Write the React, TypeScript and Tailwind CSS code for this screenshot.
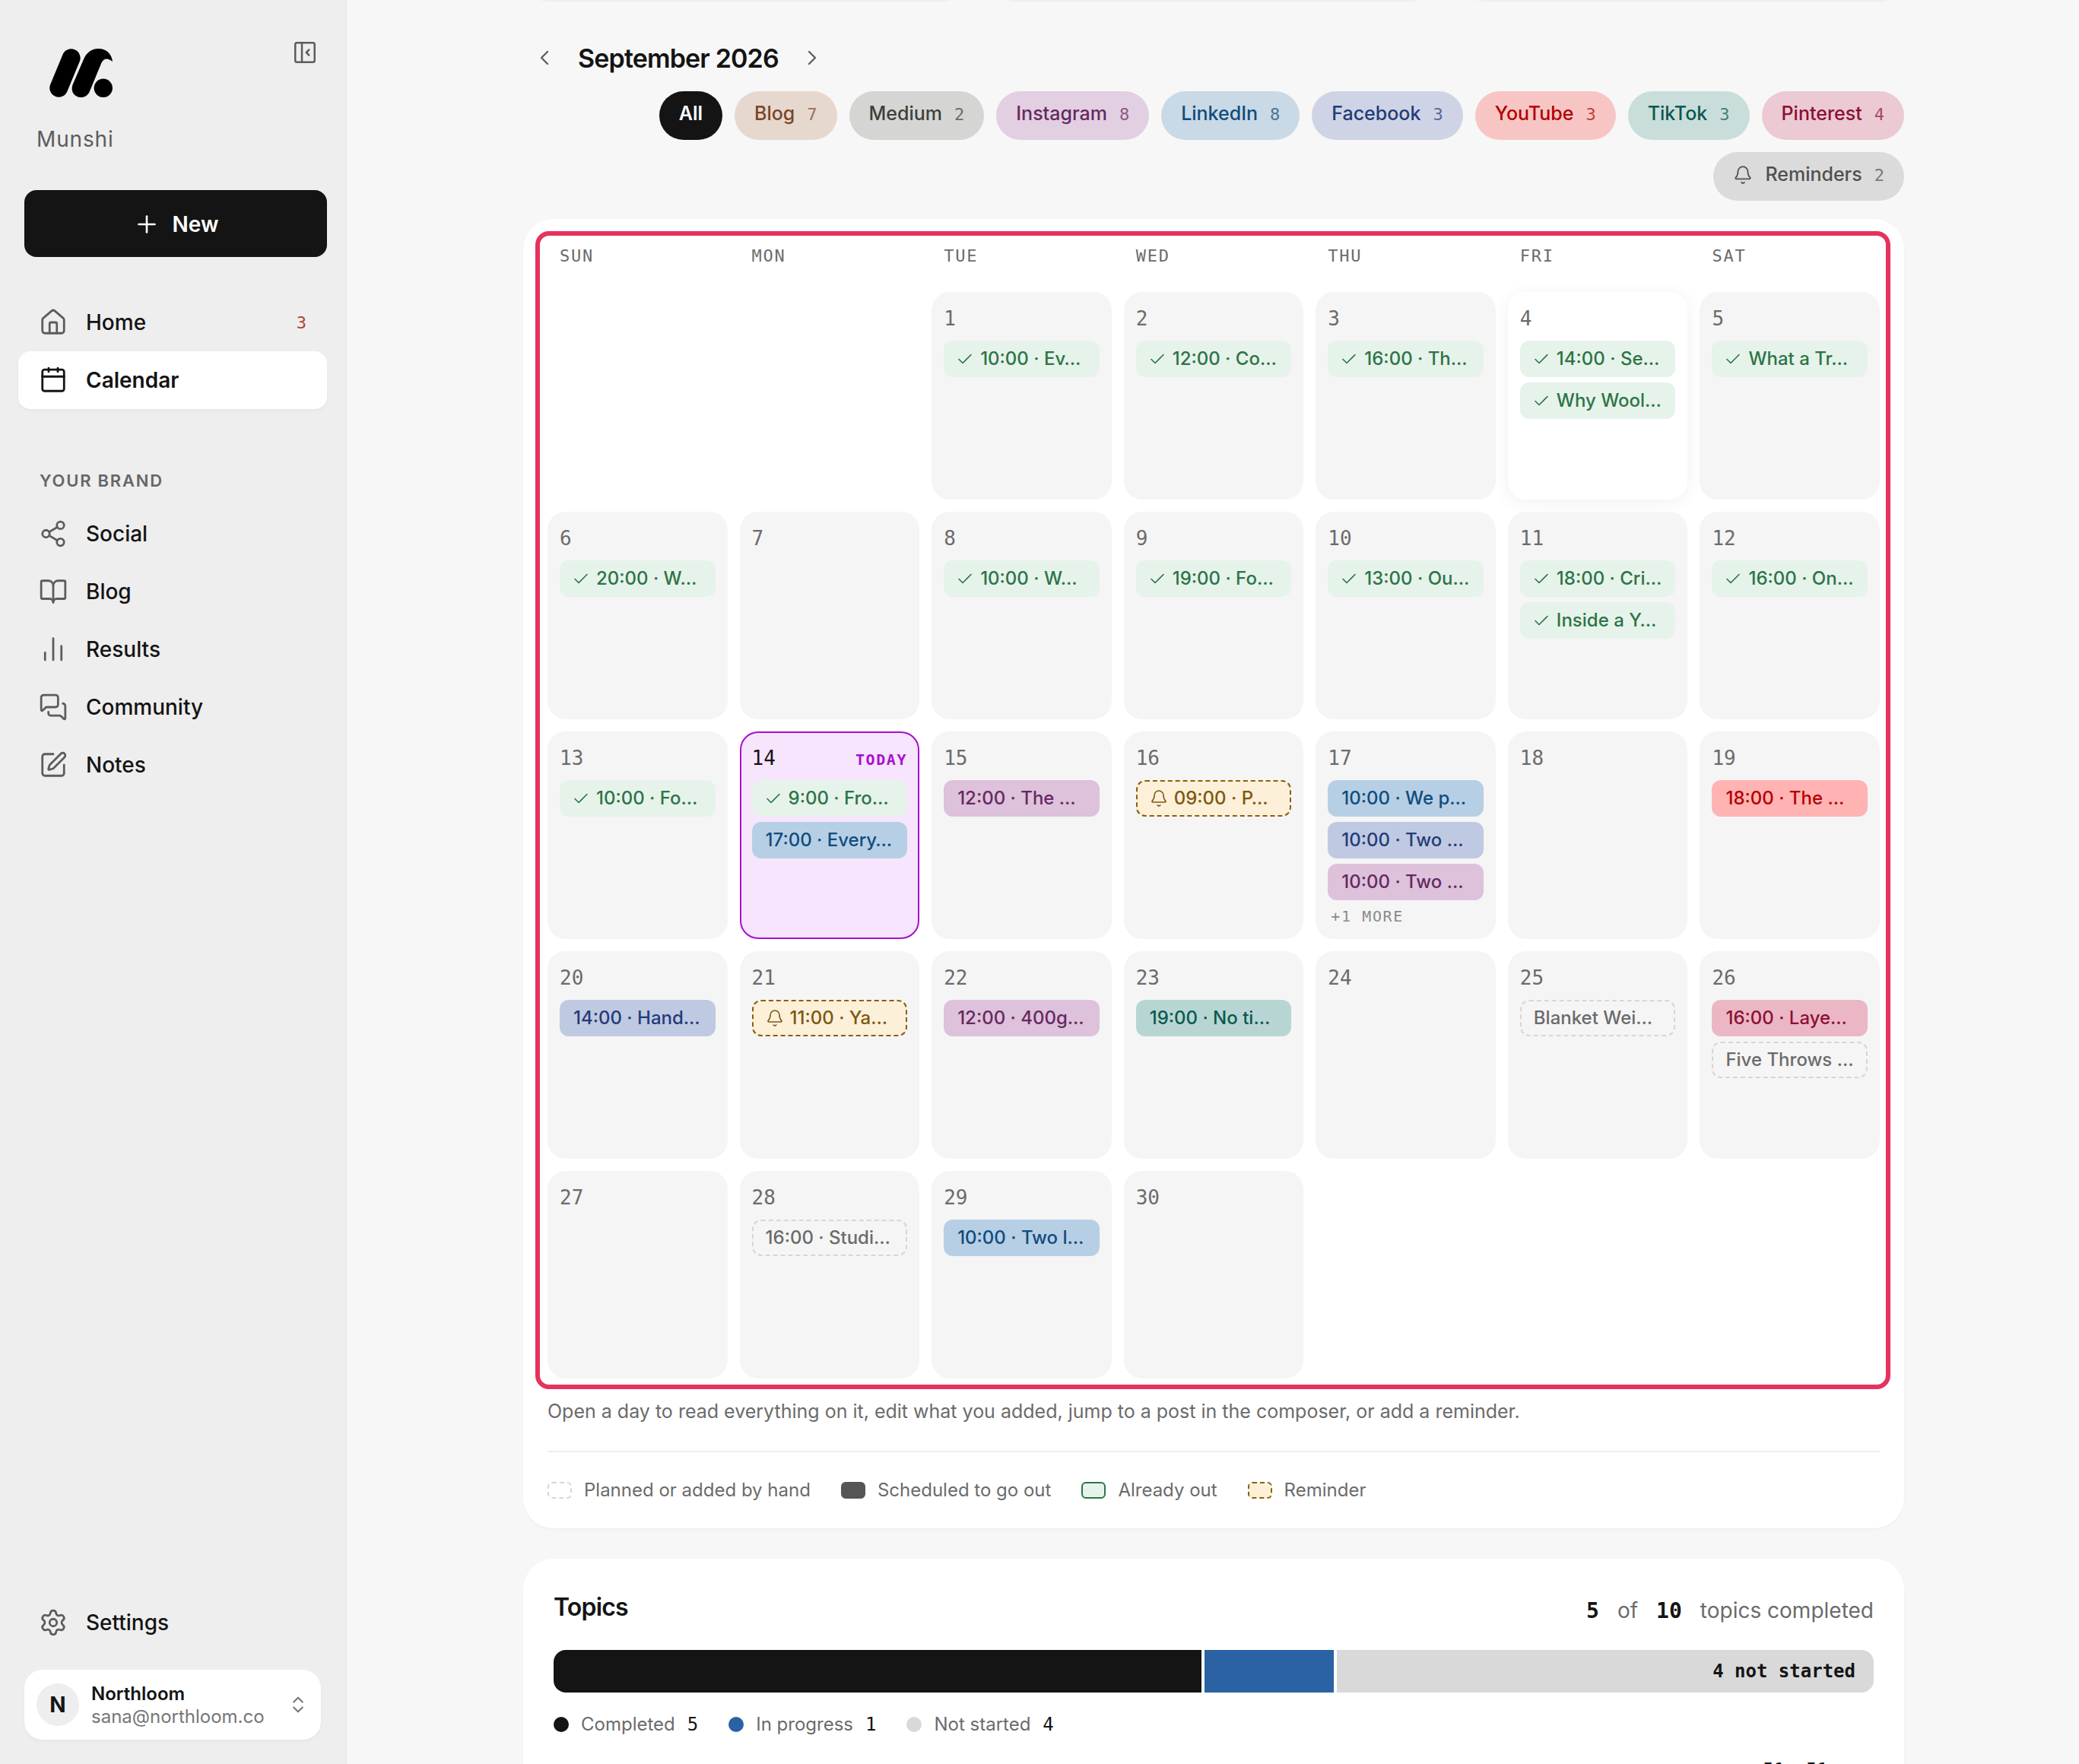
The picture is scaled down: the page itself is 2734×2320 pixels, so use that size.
import type { ReactNode } from "react";
import {
  House, Share2, BookOpen, MessagesSquare, SquarePen, Settings,
  Bell, Plus, ChevronLeft, ChevronRight, ChevronsUpDown,
} from "lucide-react";

type Kind =
  | "out" | "instagram" | "linkedin" | "facebook" | "youtube"
  | "tiktok" | "pinterest" | "reminder" | "planned";

interface Entry {
  kind: Kind;
  text: string;
}

interface Day {
  entries: Entry[];
  more?: number;
}

const MONO = "font-['DejaVu_Sans_Mono',monospace]";

const chipStyles: Record<Kind, string> = {
  out: "border-transparent bg-[#e6f3ea] text-[#2c7448]",
  instagram: "border-transparent bg-[#dec1db] text-[#642a62]",
  linkedin: "border-transparent bg-[#b6cfe5] text-[#104c7c]",
  facebook: "border-transparent bg-[#bfc9e2] text-[#243b78]",
  youtube: "border-transparent bg-[#ffb3b3] text-[#b30000]",
  tiktok: "border-transparent bg-[#b7d6d3] text-[#0c5850]",
  pinterest: "border-transparent bg-[#ebb7c4] text-[#8c0f33]",
  reminder: "border-dashed border-[#8a6010] bg-[#fcf0d9] text-[#7d5810]",
  planned: "border-dashed border-[#d6d6d6] text-[#6b6b6b]",
};

const filters = [
  { label: "Blog", count: 7, style: "bg-[#e6d8cf] text-[#7a4526]" },
  { label: "Medium", count: 2, style: "bg-[#d5d6d3] text-[#3f403a]" },
  { label: "Instagram", count: 8, style: "bg-[#e2cfe1] text-[#642a62]" },
  { label: "LinkedIn", count: 8, style: "bg-[#c9d9e5] text-[#104c7c]" },
  { label: "Facebook", count: 3, style: "bg-[#ced4e5] text-[#243b78]" },
  { label: "YouTube", count: 3, style: "bg-[#f7c6c4] text-[#b30000]" },
  { label: "TikTok", count: 3, style: "bg-[#c9dedb] text-[#0c5850]" },
  { label: "Pinterest", count: 4, style: "bg-[#ebcad3] text-[#8c0f33]" },
];

const out = (text: string): Entry => ({ kind: "out", text });

const days: Record<number, Day> = {
  1: { entries: [out("10:00 · Ev…")] },
  2: { entries: [out("12:00 · Co…")] },
  3: { entries: [out("16:00 · Th…")] },
  4: { entries: [out("14:00 · Se…"), out("Why Wool…")] },
  5: { entries: [out("What a Tr…")] },
  6: { entries: [out("20:00 · W…")] },
  8: { entries: [out("10:00 · W…")] },
  9: { entries: [out("19:00 · Fo…")] },
  10: { entries: [out("13:00 · Ou…")] },
  11: { entries: [out("18:00 · Cri…"), out("Inside a Y…")] },
  12: { entries: [out("16:00 · On…")] },
  13: { entries: [out("10:00 · Fo…")] },
  14: { entries: [out("9:00 · Fro…"), { kind: "linkedin", text: "17:00 · Every…" }] },
  15: { entries: [{ kind: "instagram", text: "12:00 · The …" }] },
  16: { entries: [{ kind: "reminder", text: "09:00 · P…" }] },
  17: {
    entries: [
      { kind: "linkedin", text: "10:00 · We p…" },
      { kind: "facebook", text: "10:00 · Two …" },
      { kind: "instagram", text: "10:00 · Two …" },
    ],
    more: 1,
  },
  19: { entries: [{ kind: "youtube", text: "18:00 · The …" }] },
  20: { entries: [{ kind: "facebook", text: "14:00 · Hand…" }] },
  21: { entries: [{ kind: "reminder", text: "11:00 · Ya…" }] },
  22: { entries: [{ kind: "instagram", text: "12:00 · 400g…" }] },
  23: { entries: [{ kind: "tiktok", text: "19:00 · No ti…" }] },
  25: { entries: [{ kind: "planned", text: "Blanket Wei…" }] },
  26: {
    entries: [
      { kind: "pinterest", text: "16:00 · Laye…" },
      { kind: "planned", text: "Five Throws …" },
    ],
  },
  28: { entries: [{ kind: "planned", text: "16:00 · Studi…" }] },
  29: { entries: [{ kind: "linkedin", text: "10:00 · Two l…" }] },
};

const TODAY = 14;
const HOVERED = 4;

const Logo = () => (
  <svg viewBox="0 0 83 64" className="w-[83px] h-16" aria-label="Munshi logo">
    <path d="M12.3 51.7 28.6 12.3" stroke="#000" strokeWidth="24" strokeLinecap="round" />
    <path d="M41.5 64c-9 0-14-8-11-16.500L45 14C49 4.500 56 0 64.500 0 75 0 82 7 83 17.200 77 11.500 71.500 12.500 68.500 18.500L53 56c-2.300 5.500-6.500 8-11.500 8z" fill="#000" />
    <circle cx="70.800" cy="51.800" r="12.200" fill="#000" />
  </svg>
);

const PanelIcon = () => (
  <svg width="34" height="34" viewBox="0 0 24 24" fill="none" stroke="currentColor" strokeWidth="1.75" strokeLinecap="round" strokeLinejoin="round">
    <rect x="3" y="3" width="18" height="18" rx="1.6" />
    <path d="M9.200 3v18" />
    <path d="M15.800 9.500 13.300 12l2.500 2.500" />
  </svg>
);

const CalendarIcon = () => (
  <svg width="38" height="38" viewBox="0 0 24 24" fill="none" stroke="currentColor" strokeWidth="1.75" strokeLinecap="round" strokeLinejoin="round">
    <rect x="3" y="3.200" width="18" height="17.800" rx="1.800" />
    <path d="M3 9h18M8.200 2v3M15.800 2v3" />
  </svg>
);

const BarsIcon = () => (
  <svg width="38" height="38" viewBox="0 0 24 24" fill="none" stroke="currentColor" strokeWidth="1.75" strokeLinecap="round">
    <path d="M5.200 20.800v-6M12 20.800V3M18.800 20.800v-11.500" />
  </svg>
);

const CheckIcon = () => (
  <svg className="w-6 h-6 shrink-0" viewBox="0 0 24 24" fill="none" stroke="currentColor" strokeWidth="1.6" strokeLinecap="round" strokeLinejoin="round">
    <path d="m2 12.500 5 5 11-11" />
  </svg>
);

const NavItem = ({ icon, label, active, badge }: { icon: ReactNode; label: string; active?: boolean; badge?: number }) => (
  <a
    href="#"
    className={`flex items-center h-[76px] px-[27px] gap-6 rounded-2xl text-[28px] text-[#141414] ${
      active ? "bg-white font-semibold shadow-[0_2px_4px_rgba(0,0,0,0.04)]" : "font-medium"
    }`}
  >
    <span className={active ? "text-[#141414]" : "text-[#5c5c5c]"}>{icon}</span>
    {label}
    {badge && <span className={`ml-auto text-[22px] font-normal text-[#b0413a] ${MONO}`}>{badge}</span>}
  </a>
);

const Sidebar = () => (
  <aside className="w-[456px] h-screen shrink-0 flex flex-col px-6 pb-8 bg-[#eeeeee] border-r-2 border-[#e8e8e8]">
    <div className="flex justify-between pt-[52px] pl-[41px] pr-3">
      <div className="pt-3">
        <Logo />
      </div>
      <button aria-label="Collapse sidebar" className="self-start text-[#5c5c5c]">
        <PanelIcon />
      </button>
    </div>
    <p className="mt-[35px] ml-6 text-[28px] leading-10 tracking-[0.03em] text-[#5c5c5c]">Munshi</p>

    <button className="mt-[47px] ml-2 pt-0.5 h-[88px] shrink-0 rounded-2xl bg-[#141414] text-white text-[28px] font-semibold flex items-center justify-center gap-4">
      <Plus size={36} strokeWidth={1.75} />
      New
    </button>

    <nav className="mt-12">
      <NavItem icon={<House size={38} strokeWidth={1.75} />} label="Home" badge={3} />
      <NavItem icon={<CalendarIcon />} label="Calendar" active />
    </nav>

    <h2 className="mt-[78px] mb-4 ml-7 text-[22px] leading-8 font-semibold tracking-[0.08em] text-[#666666]">YOUR BRAND</h2>
    <nav>
      <NavItem icon={<Share2 size={38} strokeWidth={1.75} />} label="Social" />
      <NavItem icon={<BookOpen size={38} strokeWidth={1.75} />} label="Blog" />
      <NavItem icon={<BarsIcon />} label="Results" />
      <NavItem icon={<MessagesSquare size={38} strokeWidth={1.75} />} label="Community" />
      <NavItem icon={<SquarePen size={38} strokeWidth={1.75} />} label="Notes" />
    </nav>

    <div className="mt-auto">
      <NavItem icon={<Settings size={38} strokeWidth={1.75} />} label="Settings" />
      <button className="mt-6 ml-2 w-[390px] h-[92px] px-4 flex items-center gap-4 rounded-3xl bg-white text-left shadow-[0_2px_4px_rgba(0,0,0,0.04)]">
        <span className="w-14 h-14 rounded-full bg-[#eeeeee] flex items-center justify-center text-[28px] font-bold text-[#141414]">N</span>
        <span className="flex-1 pt-0.5 flex flex-col text-2xl leading-[30px]">
          <span className="font-semibold text-[#141414]">Northloom</span>
          <span className="text-[#767676]">sana@northloom.co</span>
        </span>
        <ChevronsUpDown size={28} strokeWidth={1.75} className="text-[#767676]" />
      </button>
    </div>
  </aside>
);

const Chip = ({ entry }: { entry: Entry }) => (
  <span className={`flex items-center h-12 px-4 border-2 rounded-xl overflow-hidden whitespace-nowrap text-2xl font-medium ${entry.kind === "out" ? "gap-1.5" : "gap-2"} ${chipStyles[entry.kind]}`}>
    {entry.kind === "out" && <CheckIcon />}
    {entry.kind === "reminder" && <Bell size={24} strokeWidth={1.6} className="shrink-0" />}
    {entry.text}
  </span>
);

const DayCell = ({ date }: { date: number }) => {
  const { entries, more } = days[date] ?? { entries: [] };
  let surface = "bg-[#f5f5f5]";
  if (date === TODAY) surface = "bg-[#f7e5fd] inset-ring-2 inset-ring-[#a80fd0]";
  if (date === HOVERED) surface = "bg-white shadow-[0_4px_24px_rgba(0,0,0,0.06)]";

  return (
    <button className={`flex flex-col justify-start min-h-[273px] min-w-0 p-4 rounded-3xl text-left ${surface}`}>
      <span className={`flex items-baseline justify-between leading-[38px] ${MONO}`}>
        <span className={`text-[26px] ${date === TODAY ? "text-[#141414]" : "text-[#6b6b6b]"}`}>{date}</span>
        {date === TODAY && <span className="text-xl font-bold tracking-[0.08em] text-[#a80fd0]">TODAY</span>}
      </span>
      <span className="mt-2.5 flex flex-col gap-[7px]">
        {entries.map((entry, i) => (
          <Chip key={i} entry={entry} />
        ))}
        {more && (
          <span className={`pl-1 text-xl tracking-[0.08em] text-[#8a8a8a] ${MONO}`}>+{more} MORE</span>
        )}
      </span>
    </button>
  );
};

const Filters = () => (
  <div className="flex flex-wrap justify-end gap-4 text-[25px] font-medium">
    <button className="h-16 px-[26px] pb-1 rounded-full bg-[#141414] text-white font-semibold">All</button>
    {filters.map((f) => (
      <button key={f.label} className={`h-16 px-[26px] pb-1 rounded-full flex items-center gap-4 ${f.style}`}>
        {f.label}
        <span className={`text-[22px] font-normal opacity-70 ${MONO}`}>{f.count}</span>
      </button>
    ))}
    <button className="h-16 px-[26px] pb-1 rounded-full flex items-center gap-4 bg-[#dbdbdb] text-[#505050]">
      <Bell size={26} strokeWidth={1.6} />
      Reminders
      <span className={`text-[22px] font-normal opacity-70 ${MONO}`}>2</span>
    </button>
  </div>
);

const legend = [
  { label: "Planned or added by hand", swatch: "border-dashed border-[#d6d6d6]" },
  { label: "Scheduled to go out", swatch: "border-[#555555] bg-[#555555]" },
  { label: "Already out", swatch: "border-[#2c7448] bg-[#e6f3ea]" },
  { label: "Reminder", swatch: "border-dashed border-[#8a6010] bg-[#fcf0d9]" },
];

const CalendarCard = () => (
  <section className="mt-6 p-8 rounded-[40px] bg-white shadow-[0_2px_4px_rgba(0,0,0,0.03)]">
    <div className="relative">
      <div className={`grid grid-cols-7 gap-4 h-16 text-[22px] leading-[34px] tracking-[0.08em] text-[#6b6b6b] ${MONO}`}>
        {["SUN", "MON", "TUE", "WED", "THU", "FRI", "SAT"].map((d) => (
          <span key={d} className="pl-4">{d}</span>
        ))}
      </div>
      <div className="grid grid-cols-7 gap-4">
        {/* September 2026 starts on a Tuesday */}
        <span className="col-span-2" />
        {Array.from({ length: 30 }, (_, i) => (
          <DayCell key={i + 1} date={i + 1} />
        ))}
      </div>
      {/* highlight frame over the month grid */}
      <div className="absolute -top-4 -left-4 -right-3.5 -bottom-3.5 border-[6px] border-[#e6325c] rounded-[18px] pointer-events-none" />
    </div>
    <p className="mt-[23px] text-[25px] leading-10 text-[#6b6b6b]">
      Open a day to read everything on it, edit what you added, jump to a post in the composer, or add a reminder.
    </p>
    <div className="mt-8 pt-8 border-t-2 border-[#eeeeee] flex flex-wrap gap-10 text-2xl leading-9 text-[#6b6b6b]">
      {legend.map((l) => (
        <span key={l.label} className="flex items-center gap-4">
          <span className={`w-8 h-[22px] border-2 rounded-md ${l.swatch}`} />
          {l.label}
        </span>
      ))}
    </div>
  </section>
);

const topicStats = [
  { label: "Completed", count: 5, dot: "bg-[#141414]" },
  { label: "In progress", count: 1, dot: "bg-[#2b62a3]" },
  { label: "Not started", count: 4, dot: "bg-[#d9d9d9]" },
];

const TopicsCard = () => (
  <section className="mt-10 p-10 rounded-[40px] bg-white shadow-[0_2px_4px_rgba(0,0,0,0.03)]">
    <div className="flex items-start justify-between">
      <h2 className="text-[32px] leading-[48px] font-semibold tracking-tight text-[#141414]">Topics</h2>
      <p className="h-14 flex items-baseline gap-6 text-[28px] leading-[56px] text-[#6b6b6b]">
        <strong className={`text-[#141414] ${MONO}`}>5</strong>
        of
        <strong className={`text-[#141414] ${MONO}`}>10</strong>
        topics completed
      </p>
    </div>
    <div className="mt-6 h-14 flex gap-1 rounded-2xl overflow-hidden">
      <div className="grow-5 basis-0 bg-[#141414]" />
      <div className="grow basis-0 bg-[#2b62a3]" />
      <div className={`grow-4 basis-0 pr-6 flex items-center justify-end bg-[#d9d9d9] text-2xl font-bold text-[#141414] ${MONO}`}>4 not started</div>
    </div>
    <div className="mt-6 flex gap-10 text-2xl leading-9 text-[#6b6b6b]">
      {topicStats.map((s) => (
        <span key={s.label} className="flex items-center gap-4">
          <span className={`w-5 h-5 rounded-full ${s.dot}`} />
          {s.label}
          <span className={`text-[#141414] ${MONO}`}>{s.count}</span>
        </span>
      ))}
    </div>
    <div className={`mt-6 pr-[60px] flex justify-end gap-7 text-2xl leading-9 text-[#141414] ${MONO}`}>
      <span>51</span>
      <span>51</span>
    </div>
  </section>
);

const App = () => {
  return (
    <div className="flex h-screen overflow-hidden bg-[#f7f7f7] font-[Inter,sans-serif]">
      <Sidebar />
      <main className="flex-1 min-w-0 pl-[42px] pr-10 overflow-hidden">
        <div className="max-w-[1816px] mx-auto">
          <div className="grid grid-cols-3 gap-8 -mt-16">
            {[0, 1, 2].map((i) => (
              <div key={i} className="h-16 rounded-[40px] bg-white shadow-[0_2px_2px_rgba(0,0,0,0.04)]" />
            ))}
          </div>
          <div className="pt-12 flex items-center gap-4">
            <button aria-label="Previous month" className="w-14 h-14 flex items-center justify-center text-[#5c5c5c]">
              <ChevronLeft size={32} strokeWidth={1.75} />
            </button>
            <h1 className="text-[34px] font-semibold tracking-tight text-[#141414]">September 2026</h1>
            <button aria-label="Next month" className="w-14 h-14 flex items-center justify-center text-[#5c5c5c]">
              <ChevronRight size={32} strokeWidth={1.75} />
            </button>
          </div>
          <div className="mt-4">
            <Filters />
          </div>
          <CalendarCard />
          <TopicsCard />
        </div>
      </main>
    </div>
  );
};

export default App;
